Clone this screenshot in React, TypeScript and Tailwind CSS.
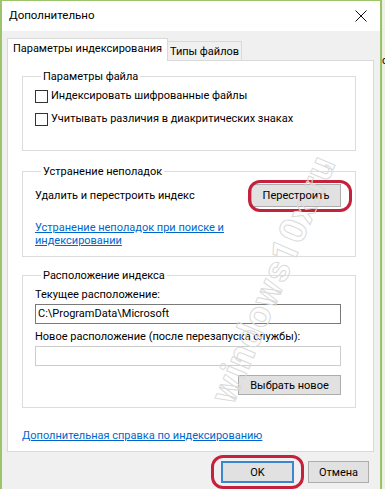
import { useState } from 'react';

const font = { fontFamily: 'Roboto, "Noto Sans", sans-serif' };

function Checkbox({ label }: { label: string }) {
	const [checked, setChecked] = useState(false);
	return (
		<label className="flex h-[23px] cursor-default items-center gap-[3px]">
			<button
				type="button"
				onClick={() => {
					setChecked(!checked);
				}}
				className="flex h-[13px] w-[13px] items-center justify-center border border-[#333333] bg-white text-[10px] leading-none"
			>
				{checked ? '✓' : ''}
			</button>
			<span>{label}</span>
		</label>
	);
}

function GroupBox({ title, className, children }: { title: string; className?: string; children: React.ReactNode }) {
	return (
		<fieldset className={`mx-[14px] mr-[17px] border border-[#dcdcdc] px-[12px] ${className ?? ''}`}>
			<legend className="ml-[6px] px-[2px] leading-[15px]">{title}</legend>
			{children}
		</fieldset>
	);
}

function WinButton({ children, className }: { children: React.ReactNode; className?: string }) {
	return (
		<button
			type="button"
			className={`flex items-center justify-center border border-[#adadad] bg-[#e1e1e1] leading-none ${className ?? ''}`}
		>
			{children}
		</button>
	);
}

export default function App() {
	const [tab, setTab] = useState<'index' | 'types'>('index');

	return (
		<div className="flex h-[489px] w-[385px] overflow-hidden text-[11px] text-black" style={font}>
			<div className="relative flex w-[381px] shrink-0 flex-col border-t border-r border-l-2 border-[#9cc46a] bg-[#f0f0f0]">
				{/* title bar */}
				<div className="flex h-[30px] shrink-0 items-center justify-between bg-white pr-[8px] pl-[7px]">
					<span className="text-[11.5px]">Дополнительно</span>
					<svg width="12" height="12" viewBox="0 0 12 12" className="mr-[5px]">
						<path d="M0.5 0.5 L11.5 11.5 M11.5 0.5 L0.5 11.5" stroke="#111" strokeWidth="1" fill="none" />
					</svg>
				</div>

				{/* tabs */}
				<div className="flex items-end pt-[7px] pl-[5px]">
					<button
						type="button"
						onClick={() => {
							setTab('index');
						}}
						className="relative z-10 -mb-px h-[23px] w-[161px] border border-b-0 border-[#d9d9d9] bg-white pb-[3px] leading-none whitespace-nowrap"
					>
						Параметры индексирования
					</button>
					<button
						type="button"
						onClick={() => {
							setTab('types');
						}}
						className="h-[19px] w-[74px] border border-b-0 border-l-0 border-[#d9d9d9] bg-[#f0f0f0] leading-none whitespace-nowrap"
					>
						Типы файлов
					</button>
				</div>

				{/* panel */}
				<div className="relative mr-[6px] ml-[5px] flex h-[392px] flex-col border border-[#d9d9d9] bg-white">
					{tab === 'index' && (
						<>
							<GroupBox title="Параметры файла" className="mt-[8px] h-[82px]">
								<div className="mt-[1px] flex flex-col">
									<Checkbox label="Индексировать шифрованные файлы" />
									<Checkbox label="Учитывать различия в диакритических знаках" />
								</div>
							</GroupBox>

							<GroupBox title="Устранение неполадок" className="mt-[13px] h-[93px]">
								<div className="flex h-[23px] items-center justify-between pt-[11px] pr-[2px]">
									<span>Удалить и перестроить индекс</span>
									<span className="relative -mt-[2px]">
										<WinButton className="h-[23px] w-[90px]">Перестроить</WinButton>
										<span className="pointer-events-none absolute -top-[4px] -right-[11px] -bottom-[5px] -left-[3px] rounded-[12px] border-[3px] border-[#c4223c]" />
									</span>
								</div>
								<a href="#" className="mt-[19px] block leading-[13px] text-[#0066cc] underline">
									Устранение неполадок при поиске и
									<br />
									индексировании
								</a>
							</GroupBox>

							<GroupBox title="Расположение индекса" className="mt-[11px] h-[140px]">
								<div className="flex flex-col pr-[2px]">
									<span className="mt-[4px] leading-[15px]">Текущее расположение:</span>
									<div className="mt-[2px] flex h-[20px] items-center border border-[#7a7a7a] bg-white pl-[2px]">
										C:\ProgramData\Microsoft
									</div>
									<span className="mt-[5px] leading-[15px]">Новое расположение (после перезапуска службы):</span>
									<div className="mt-[2px] h-[20px] border border-[#cccccc] bg-white" />
									<div className="mt-[9px] flex justify-end">
										<WinButton className="h-[20px] w-[103px]">Выбрать новое</WinButton>
									</div>
								</div>
							</GroupBox>

							<a href="#" className="mt-[20px] ml-[14px] self-start leading-[15px] text-[#0066cc] underline">
								Дополнительная справка по индексированию
							</a>
						</>
					)}

					{/* watermark */}
					<div className="pointer-events-none absolute top-[200px] left-[125px] w-[280px] -rotate-[67deg] text-center text-[37px] leading-none font-bold tracking-[1px] text-transparent [-webkit-text-stroke:1px_#dadada]">
						windows10x.ru
					</div>
				</div>

				{/* footer buttons */}
				<div className="flex justify-end gap-[14px] pt-[9px] pr-[11px]">
					<span className="relative">
						<button
							type="button"
							className="flex h-[22px] w-[73px] items-center justify-center border-2 border-[#3b86cf] bg-[#e1e1e1] leading-none"
						>
							OK
						</button>
						<span className="pointer-events-none absolute -top-[6px] -right-[10px] -bottom-[6px] -left-[10px] rounded-[12px] border-[3px] border-[#c4223c]" />
					</span>
					<WinButton className="h-[22px] w-[61px]">Отмена</WinButton>
				</div>
			</div>

			{/* strip of what lies behind the dialog */}
			<div className="flex-1 border-l border-[#a9a9a9] bg-[#eef0e4]">
				<div className="mt-[53px] text-[11px]">c</div>
			</div>
		</div>
	);
}
